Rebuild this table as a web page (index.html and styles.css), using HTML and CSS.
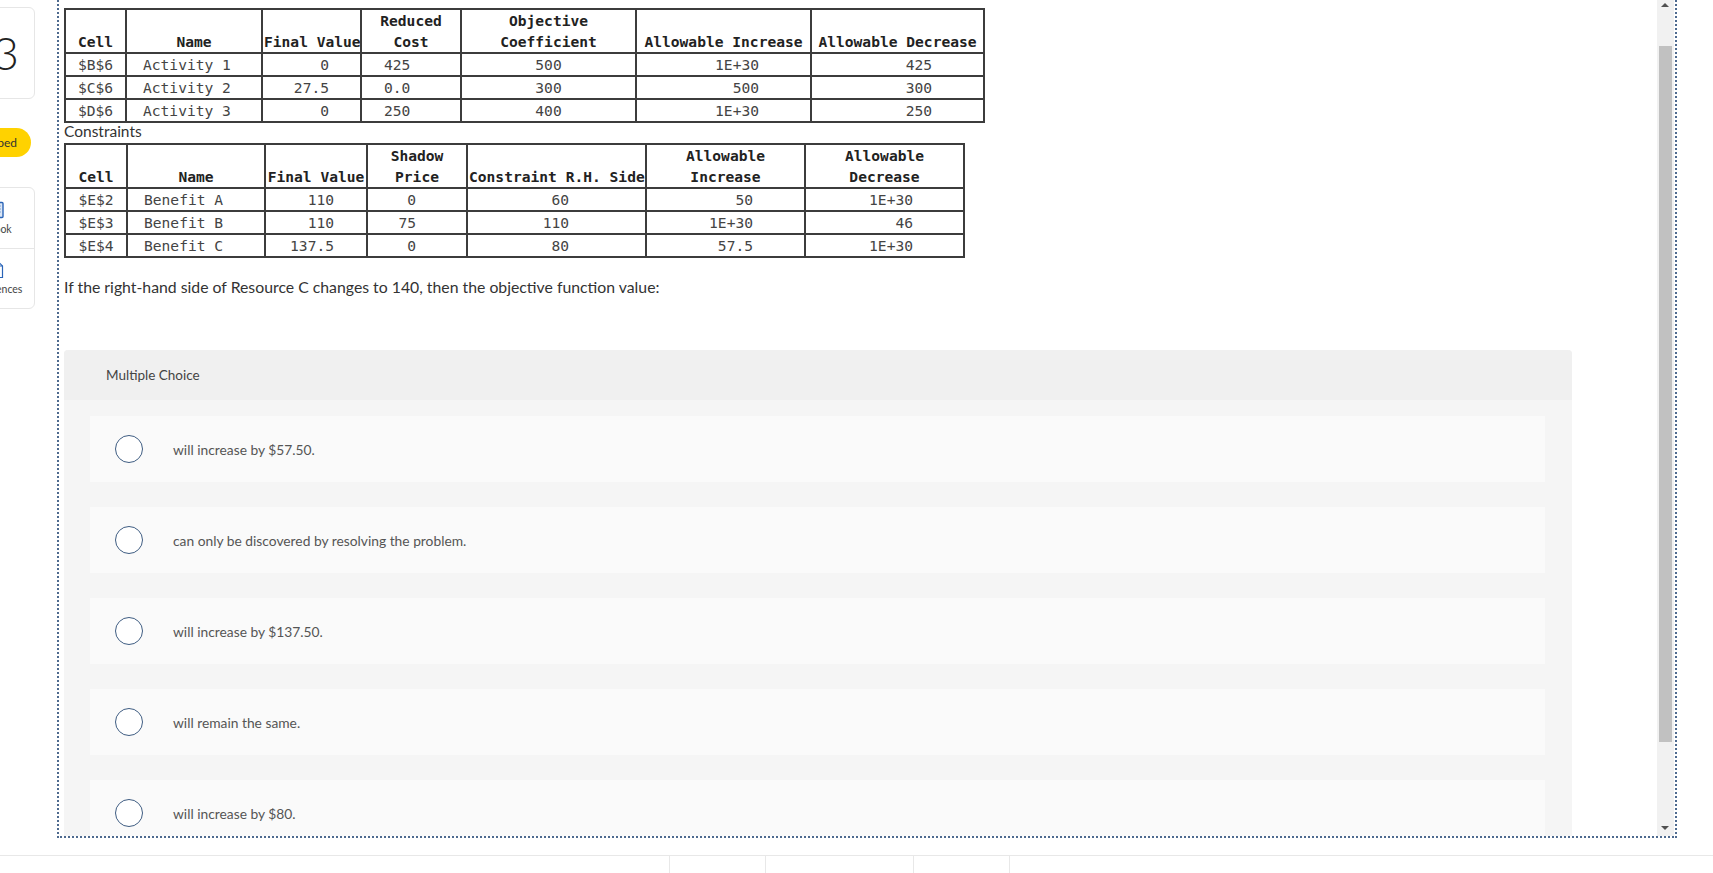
FILE: index.html
```html
<!DOCTYPE html>
<html lang="en">
<head>
<meta charset="utf-8">
<title>Question 3</title>
<link rel="stylesheet" href="styles.css">
</head>
<body>
<div class="page">
  <aside class="sidebar">
    <div class="card qnum"><span>3</span></div>
    <div class="pill">Skipped</div>
    <div class="card tools">
      <div class="tool">
        <svg class="ico" viewBox="0 0 18 18" width="18" height="18"><rect x="3" y="1.5" width="12" height="15" rx="1" fill="#dbe6f5" stroke="#2a64b7" stroke-width="1.4"/><path d="M5.5 5h7M5.5 8h7M5.5 11h7" stroke="#2a64b7" stroke-width="1.2"/></svg>
        <span>eBook</span>
      </div>
      <div class="tool sep">
        <svg class="ico" viewBox="0 0 18 18" width="18" height="18"><path d="M4 1.5h7l3.5 3.5v11.5h-10.5z" fill="#fff" stroke="#2a64b7" stroke-width="1.2"/><path d="M11 1.5v3.5h3.5" fill="none" stroke="#2a64b7" stroke-width="1.2"/></svg>
        <span>References</span>
      </div>
    </div>
  </aside>

  <main class="frame">
    <div class="content">
      <table class="grid t1">
        <colgroup><col class="w61"><col class="w136"><col class="w99"><col class="w100"><col class="w175"><col class="w175"><col class="w173"></colgroup>
        <thead>
          <tr><th>Cell</th><th>Name</th><th>Final Value</th><th>Reduced<br>Cost</th><th>Objective<br>Coefficient</th><th>Allowable Increase</th><th>Allowable Decrease</th></tr>
        </thead>
        <tbody>
          <tr><td>$B$6</td><td>Activity 1</td><td>0</td><td>425</td><td>500</td><td>1E+30</td><td>425</td></tr>
          <tr><td>$C$6</td><td>Activity 2</td><td>27.5</td><td>0.0</td><td>300</td><td>500</td><td>300</td></tr>
          <tr><td>$D$6</td><td>Activity 3</td><td>0</td><td>250</td><td>400</td><td>1E+30</td><td>250</td></tr>
        </tbody>
      </table>
      <div class="caption">Constraints</div>
      <table class="grid t2">
        <colgroup><col class="w62"><col class="w138"><col class="w102"><col class="w100"><col class="w179"><col class="w159"><col class="w159"></colgroup>
        <thead>
          <tr><th>Cell</th><th>Name</th><th>Final Value</th><th>Shadow<br>Price</th><th>Constraint R.H. Side</th><th>Allowable<br>Increase</th><th>Allowable<br>Decrease</th></tr>
        </thead>
        <tbody>
          <tr><td>$E$2</td><td>Benefit A</td><td>110</td><td>0</td><td>60</td><td>50</td><td>1E+30</td></tr>
          <tr><td>$E$3</td><td>Benefit B</td><td>110</td><td>75</td><td>110</td><td>1E+30</td><td>46</td></tr>
          <tr><td>$E$4</td><td>Benefit C</td><td>137.5</td><td>0</td><td>80</td><td>57.5</td><td>1E+30</td></tr>
        </tbody>
      </table>

      <p class="question">If the right-hand side of Resource C changes to 140, then the objective function value:</p>

      <section class="mc">
        <div class="mc-head">Multiple Choice</div>
        <div class="options">
          <label class="option"><span class="radio"></span><span class="opt-text">will increase by $57.50.</span></label>
          <label class="option"><span class="radio"></span><span class="opt-text">can only be discovered by resolving the problem.</span></label>
          <label class="option"><span class="radio"></span><span class="opt-text">will increase by $137.50.</span></label>
          <label class="option"><span class="radio"></span><span class="opt-text">will remain the same.</span></label>
          <label class="option"><span class="radio"></span><span class="opt-text">will increase by $80.</span></label>
        </div>
      </section>
    </div>
    <div class="scrollbar">
      <div class="arrow up"></div>
      <div class="gap-top"></div>
      <div class="thumb"></div>
      <div class="rest"></div>
      <div class="arrow down"></div>
    </div>
  </main>
</div>
<footer class="footer">
  <div class="seg first"></div>
  <div class="seg s96"></div>
  <div class="seg s148"></div>
  <div class="seg s96"></div>
  <div class="seg last"></div>
</footer>
</body>
</html>
```

FILE: styles.css
```css
* { box-sizing: border-box; }
html, body { margin: 0; padding: 0; }
body {
  width: 1713px;
  height: 873px;
  overflow: hidden;
  background: #fff;
  font-family: Lato, "Open Sans", Arial, sans-serif;
  color: #333;
}

.page {
  display: flex;
  height: 838px;
}

/* ---------- sidebar ---------- */
.sidebar {
  width: 57px;
  flex: none;
  overflow: hidden;
  display: flex;
  flex-direction: column;
  align-items: flex-start;
  padding-top: 7px;
}
.card {
  margin-left: -41px;
  width: 76px;
  background: #fff;
  border: 1px solid #e6e6e6;
  border-radius: 6px;
}
.qnum {
  height: 92px;
  display: flex;
  align-items: center;
  justify-content: flex-end;
  padding-right: 15px;
}
.qnum span {
  font-size: 46px;
  font-weight: 300;
  color: #222;
  line-height: 1;
}
.pill {
  margin-top: 29px;
  margin-left: -45px;
  width: 76px;
  height: 29px;
  border-radius: 15px;
  background: #ffd200;
  color: #333;
  font-size: 12px;
  display: flex;
  align-items: center;
  justify-content: flex-end;
  padding-right: 14px;
}
.tools {
  margin-top: 30px;
  height: 122px;
  display: flex;
  flex-direction: column;
}
.tool {
  height: 60px;
  display: flex;
  flex-direction: column;
  align-items: center;
  justify-content: center;
  gap: 4px;
  font-size: 10.5px;
  color: #444;
}
.tool.sep { border-top: 1px solid #e6e6e6; height: 61px; }
.ico { display: block; }

/* ---------- frame ---------- */
.frame {
  width: 1620px;
  flex: none;
  display: flex;
  border-left: 2px dotted #4e6a8f;
  border-right: 2px dotted #4e6a8f;
  border-bottom: 2px dotted #4e6a8f;
}
.content {
  flex: 1;
  overflow: hidden;
  padding: 8px 0 0 5px;
}
.scrollbar {
  width: 17px;
  margin-right: 1px;
  background: #f1f1f1;
  display: flex;
  flex-direction: column;
}
.arrow { height: 17px; position: relative; }
.arrow::after {
  content: "";
  position: absolute;
  left: 4px;
  border-left: 4px solid transparent;
  border-right: 4px solid transparent;
}
.arrow.up::after { top: 3px; border-bottom: 4px solid #505050; }
.arrow.down::after { bottom: 6px; border-top: 4px solid #505050; }
.gap-top { height: 29px; }
.thumb { height: 696px; margin: 0 2px; background: #c1c1c1; }
.rest { flex: 1; }

/* ---------- tables ---------- */
.grid {
  border-collapse: collapse;
  table-layout: fixed;
  font-family: "DejaVu Sans Mono", "Liberation Mono", monospace;
  font-size: 14.6px;
  line-height: 21px;
}
.t1 { width: 919px; }
.t2 { width: 899px; }
.grid th, .grid td {
  border: 2px solid #3c3c3c;
  padding: 0 1px;
  white-space: nowrap;
  overflow: hidden;
}
.grid th {
  font-weight: bold;
  color: #222;
  text-align: center;
  vertical-align: bottom;
  height: 44px;
}
.grid td { color: #444; height: 23px; }

.w61 { width: 61px; } .w136 { width: 136px; } .w99 { width: 99px; }
.w100 { width: 100px; } .w175 { width: 175px; } .w173 { width: 173px; }
.w62 { width: 62px; } .w138 { width: 138px; } .w102 { width: 102px; }
.w179 { width: 179px; } .w159 { width: 159px; }

.grid td:nth-child(1) { text-align: center; }
.grid td:nth-child(2) { text-align: left; padding-left: 16px; }
.t1 td:nth-child(3) { text-align: right; padding-right: 31px; }
.t1 td:nth-child(4) { text-align: left; padding-left: 22px; }
.t1 td:nth-child(5) { text-align: center; }
.t1 td:nth-child(6) { text-align: right; padding-right: 51px; }
.t1 td:nth-child(7) { text-align: right; padding-right: 51px; }
.t2 td:nth-child(3) { text-align: right; padding-right: 32px; }
.t2 td:nth-child(4) { text-align: right; padding-right: 50px; }
.t2 td:nth-child(5) { text-align: right; padding-right: 76px; }
.t2 td:nth-child(6) { text-align: right; padding-right: 51px; }
.t2 td:nth-child(7) { text-align: right; padding-right: 50px; }

.caption {
  font-size: 15.5px;
  line-height: 17px;
  color: #333;
  height: 20px;
}

.question {
  margin: 19px 0 0;
  font-size: 15.8px;
  line-height: 20px;
  color: #333;
}

/* ---------- multiple choice ---------- */
.mc {
  margin-top: 53px;
  width: 1508px;
  background: #f5f5f5;
  border-radius: 4px 4px 0 0;
}
.mc-head {
  height: 50px;
  background: #f0f0f0;
  border-radius: 4px 4px 0 0;
  padding-left: 42px;
  display: flex;
  align-items: center;
  font-size: 13.5px;
  color: #444;
}
.options {
  padding: 16px 27px 0 26px;
  display: flex;
  flex-direction: column;
  gap: 25px;
}
.option {
  height: 66px;
  background: #fafafa;
  display: flex;
  align-items: center;
  padding-left: 25px;
}
.radio {
  width: 28px;
  height: 28px;
  border-radius: 50%;
  border: 1.5px solid #3f5d82;
  background: #fff;
  flex: none;
}
.opt-text {
  margin-left: 30px;
  font-size: 13.8px;
  color: #555;
}

/* ---------- footer ---------- */
.footer {
  margin-top: 17px;
  border-top: 1px solid #e8e8e8;
  display: flex;
  height: 18px;
}
.seg { height: 100%; }
.seg.first { width: 669px; }
.seg.s96 { width: 96px; border-left: 1px solid #e8e8e8; }
.seg.s148 { width: 148px; border-left: 1px solid #e8e8e8; }
.seg.last { flex: 1; border-left: 1px solid #e8e8e8; }
```
